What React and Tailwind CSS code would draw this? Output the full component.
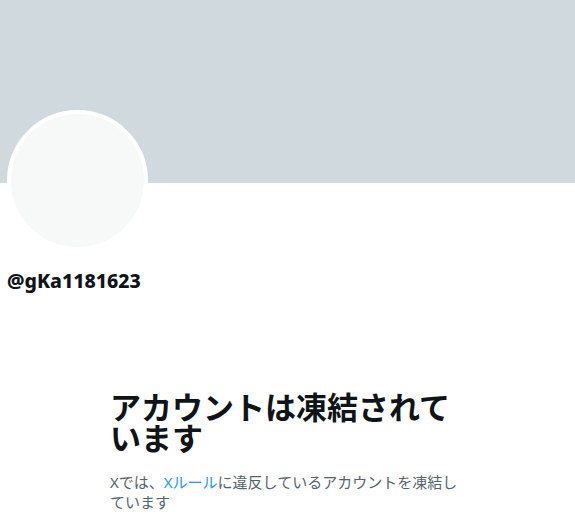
import React from "react";

const jp = "font-['Noto_Sans','Noto_Sans_CJK_JP',sans-serif]";

const App = () => {
  return (
    <div className={`w-[575px] h-[531px] bg-white overflow-hidden ${jp}`}>
      {/* banner */}
      <div className="h-[183px] w-full bg-[#cfd9de]" />

      {/* avatar + handle */}
      <div className="px-[7px]">
        <div className="-mt-[73px] w-[141px] h-[141px] rounded-full border-4 border-white bg-[#f7f9f9]" />
        <div className="mt-[18px] text-[19.5px] leading-[24px] font-extrabold text-[#0f1419]">
          @gKa1181623
        </div>
      </div>

      {/* suspended notice */}
      <div className="mx-auto mt-[99px] w-[355px]">
        <h1 className="text-[31px] leading-[31px] font-bold text-[#0f1419]">
          アカウントは凍結されています
        </h1>
        <p className="mt-[18px] text-[15px] leading-[20px] text-[#536471]">
          <span>Xでは、</span>
          <span className="text-[#1d9bf0]">Xルール</span>
          <span>に違反しているアカウントを凍結し</span>
          <span>ています</span>
        </p>
      </div>
    </div>
  );
};

export default App;
